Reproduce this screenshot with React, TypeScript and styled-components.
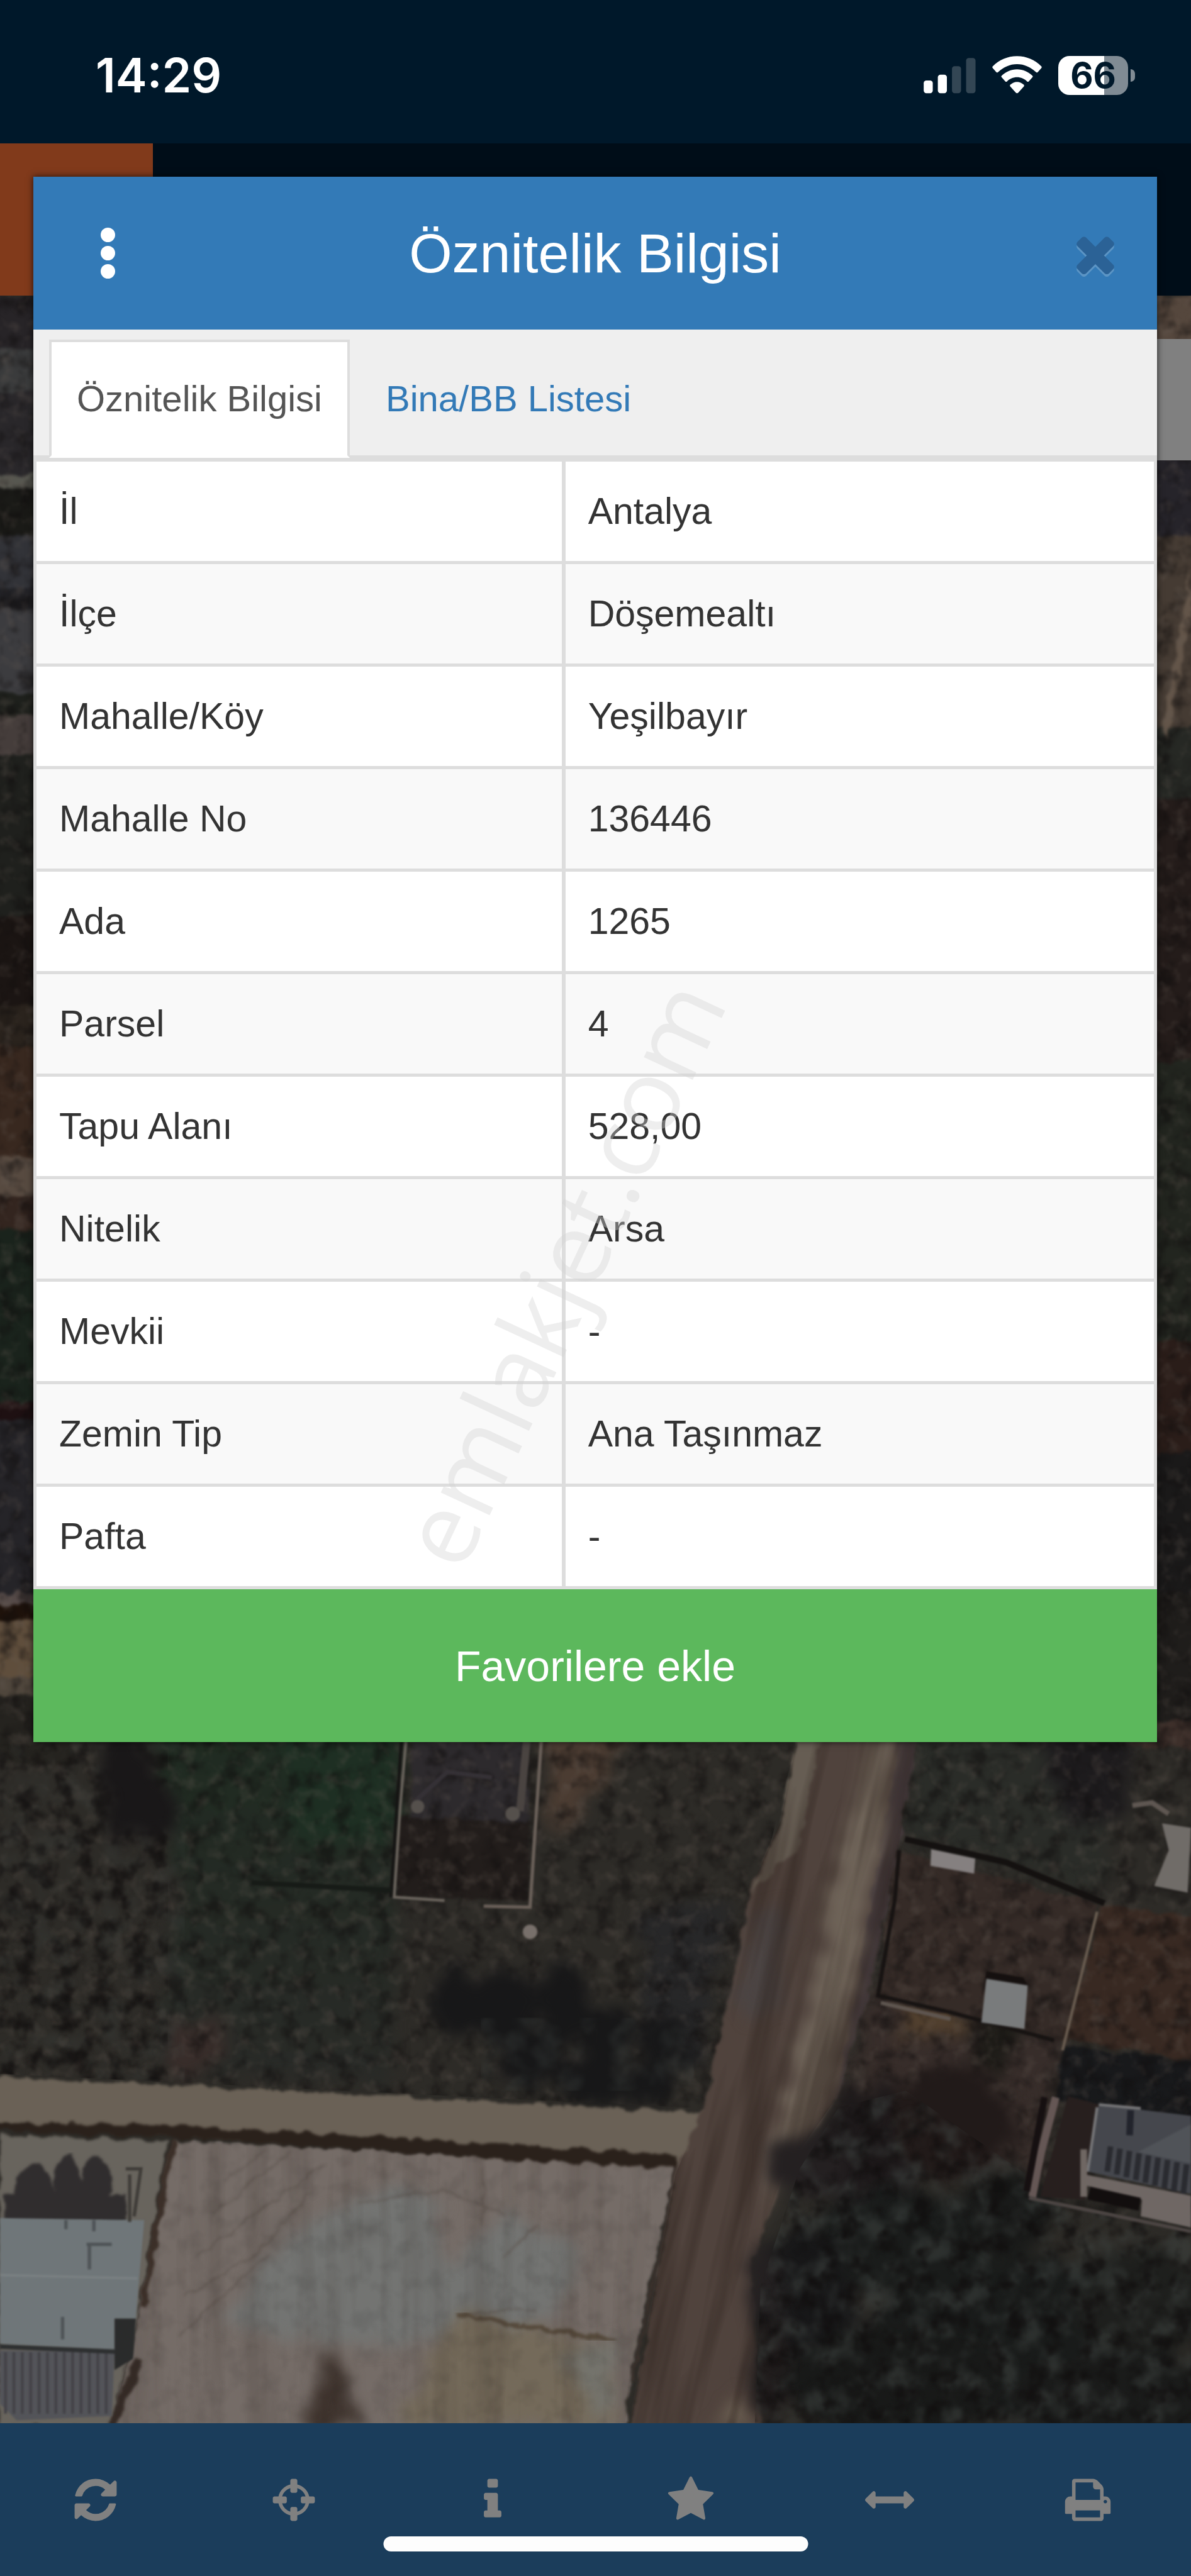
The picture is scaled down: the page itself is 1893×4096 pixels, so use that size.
import React, { useState } from "react";
import styled, { createGlobalStyle } from "styled-components";

const GlobalStyle = createGlobalStyle`
  *, *::before, *::after { box-sizing: border-box; }
  body {
    margin: 0;
    background: #00182a;
    font-family: "Liberation Sans", Arial, sans-serif;
  }
  button { font-family: inherit; cursor: pointer; }
`;

const Screen = styled.div`
  position: relative;
  display: flex;
  flex-direction: column;
  min-height: 100vh;
  overflow: hidden;
`;

const StatusBar = styled.header`
  display: flex;
  align-items: center;
  justify-content: space-between;
  height: 228px;
  padding: 12px 89px 0 152px;
  background: #00182a;
  color: #ffffff;
`;

const Clock = styled.time`
  font-family: Inter, sans-serif;
  font-size: 75px;
  line-height: 80px;
  font-weight: 600;
`;

const StatusIcons = styled.div`
  display: flex;
  align-items: center;
  gap: 26px;
`;

const Battery = styled.div`
  display: flex;
  align-items: center;
  gap: 4px;
`;

const BatteryLevel = styled.div`
  width: 111px;
  height: 62px;
  border-radius: 18px;
  background: linear-gradient(to right, #ffffff 66%, #808b94 66%);
  color: #00182a;
  font-family: Inter, sans-serif;
  font-size: 56px;
  line-height: 62px;
  font-weight: 700;
  text-align: center;
`;

const BatteryNub = styled.div`
  width: 7px;
  height: 20px;
  border-radius: 0 10px 10px 0;
  background: #808b94;
`;

const TopBar = styled.div`
  height: 242px;
  background: #000d18;
`;

const LogoTile = styled.div`
  width: 243px;
  height: 242px;
  background: #813a1b;
`;

const MapArea = styled.main`
  position: relative;
  flex: 1;
  min-height: 0;
  background: #272522;
`;

const MapDrawing = styled.svg`
  position: absolute;
  inset: 0;
  display: block;
  width: 100%;
  height: 100%;
`;

const MapControl = styled.div`
  position: absolute;
  top: 69px;
  right: 0;
  width: 243px;
  height: 193px;
  background: #808080;
`;

const Toolbar = styled.nav`
  display: grid;
  grid-template-columns: repeat(6, 1fr);
  height: 243px;
  background: #1b3d5b;
`;

const ToolButton = styled.button`
  display: flex;
  align-items: center;
  justify-content: center;
  padding: 0 12px 0 0;
  border: 0;
  background: transparent;
  color: #808080;
`;

const HomeIndicator = styled.div`
  position: absolute;
  left: 50%;
  bottom: 39px;
  width: 675px;
  height: 24px;
  border-radius: 12px;
  background: #fdfdfd;
  transform: translateX(-50%);
`;

const Dialog = styled.section`
  position: absolute;
  top: 281px;
  left: 53px;
  right: 54px;
  background: #ffffff;
  box-shadow: 0 0 10px rgba(0, 0, 0, 0.7);
`;

const DialogHeader = styled.div`
  display: grid;
  grid-template-columns: 236px 1fr 236px;
  align-items: center;
  height: 243px;
  background: #337ab7;
  color: #ffffff;
`;

const DialogTitle = styled.h1`
  margin: 0;
  font-size: 88px;
  line-height: 96px;
  font-weight: 400;
  text-align: center;
`;

const HeaderButton = styled.button<{ $side: "left" | "right" }>`
  display: flex;
  align-items: center;
  justify-content: center;
  justify-self: ${(p) => (p.$side === "left" ? "start" : "end")};
  width: ${(p) => (p.$side === "left" ? "236px" : "196px")};
  height: 200px;
  padding: 0;
  border: 0;
  background: transparent;
  color: #2b6296;
`;

const Dots = styled.span`
  display: flex;
  flex-direction: column;
  gap: 6px;
`;

const Dot = styled.span`
  width: 23px;
  height: 23px;
  border-radius: 50%;
  background: #ffffff;
`;

const Tabs = styled.div`
  display: flex;
  gap: 13px;
  height: 205px;
  padding: 16px 25px 0;
  border-bottom: 5px solid #dddddd;
  background: #efefef;
`;

const Tab = styled.button<{ $active: boolean }>`
  height: 188px;
  padding: 0 40px;
  border: 4px solid ${(p) => (p.$active ? "#dddddd" : "transparent")};
  border-bottom-color: ${(p) => (p.$active ? "#ffffff" : "transparent")};
  background: ${(p) => (p.$active ? "#ffffff" : "transparent")};
  color: ${(p) => (p.$active ? "#555555" : "#337ab7")};
  font-size: 58px;
  line-height: 84px;
`;

const Table = styled.table`
  width: 100%;
  border-collapse: separate;
  border-spacing: 0;
  border-top: 5px solid #dddddd;
  border-left: 5px solid #dddddd;
  color: #333333;
  font-size: 59px;
  line-height: 84px;
`;

const Row = styled.tr`
  background: #ffffff;
  &:nth-child(even) { background: #f9f9f9; }
`;

const NameCell = styled.th`
  width: 47.2%;
  padding: 37px 36px;
  border-right: 6px solid #dddddd;
  border-bottom: 5px solid #dddddd;
  font-weight: 400;
  text-align: left;
`;

const ValueCell = styled.td`
  padding: 37px 36px;
  border-right: 5px solid #dddddd;
  border-bottom: 5px solid #dddddd;
`;

const FavoriteButton = styled.button`
  display: block;
  width: 100%;
  height: 243px;
  border: 0;
  background: #5cb85c;
  color: #ffffff;
  font-size: 68px;
  line-height: 88px;
`;

const Watermark = styled.div`
  position: absolute;
  left: 47%;
  top: 49.4%;
  color: rgba(209, 209, 209, 0.38);
  font-family: "Open Sans", "Noto Sans", sans-serif;
  font-size: 160px;
  line-height: 218px;
  white-space: nowrap;
  pointer-events: none;
  transform: translate(-50%, -50%) rotate(-65deg);
`;

const rows: [string, string][] = [
  ["İl", "Antalya"],
  ["İlçe", "Döşemealtı"],
  ["Mahalle/Köy", "Yeşilbayır"],
  ["Mahalle No", "136446"],
  ["Ada", "1265"],
  ["Parsel", "4"],
  ["Tapu Alanı", "528,00"],
  ["Nitelik", "Arsa"],
  ["Mevkii", "-"],
  ["Zemin Tip", "Ana Taşınmaz"],
  ["Pafta", "-"],
];

const icons = {
  times:
    "M1490 1322q0 40-28 68l-136 136q-28 28-68 28t-68-28l-294-294-294 294q-28 28-68 28t-68-28l-136-136q-28-28-28-68t28-68l294-294-294-294q-28-28-28-68t28-68l136-136q28-28 68-28t68 28l294 294 294-294q28-28 68-28t68 28l136 136q28 28 28 68t-28 68l-294 294 294 294q28 28 28 68z",
  refresh:
    "M1639 1056q0 5-1 7-64 268-268 434.5t-478 166.5q-146 0-282.5-55t-243.5-157l-129 129q-19 19-45 19t-45-19-19-45v-448q0-26 19-45t45-19h448q26 0 45 19t19 45-19 45l-137 137q71 66 161 102t187 36q134 0 250-65t186-179q11-17 53-117 8-23 30-23h192q13 0 22.5 9.5t9.5 22.5zm25-800v448q0 26-19 45t-45 19h-448q-26 0-45-19t-19-45 19-45l138-138q-148-137-349-137-134 0-250 65t-186 179q-11 17-53 117-8 23-30 23h-199q-13 0-22.5-9.5t-9.5-22.5v-7q65-268 270-434.5t480-166.5q146 0 284 55.5t245 156.5l130-129q19-19 45-19t45 19 19 45z",
  crosshairs:
    "M1325 1024h-109q-26 0-45-19t-19-45v-128q0-26 19-45t45-19h109q-32-108-112.5-188.5t-188.5-112.5v109q0 26-19 45t-45 19h-128q-26 0-45-19t-19-45v-109q-108 32-188.5 112.5t-112.5 188.5h109q26 0 45 19t19 45v128q0 26-19 45t-45 19h-109q32 108 112.5 188.5t188.5 112.5v-109q0-26 19-45t45-19h128q26 0 45 19t19 45v109q108-32 188.5-112.5t112.5-188.5zm339-192v128q0 26-19 45t-45 19h-143q-37 161-154.5 278.5t-278.5 154.5v143q0 26-19 45t-45 19h-128q-26 0-45-19t-19-45v-143q-161-37-278.5-154.5t-154.5-278.5h-143q-26 0-45-19t-19-45v-128q0-26 19-45t45-19h143q37-161 154.5-278.5t278.5-154.5v-143q0-26 19-45t45-19h128q26 0 45 19t19 45v143q161 37 278.5 154.5t154.5 278.5h143q26 0 45 19t19 45z",
  info:
    "M1216 1344v128q0 26-19 45t-45 19h-512q-26 0-45-19t-19-45v-128q0-26 19-45t45-19h64v-384h-64q-26 0-45-19t-19-45v-128q0-26 19-45t45-19h384q26 0 45 19t19 45v576h64q26 0 45 19t19 45zm-128-1152v192q0 26-19 45t-45 19h-256q-26 0-45-19t-19-45v-192q0-26 19-45t45-19h256q26 0 45 19t19 45z",
  star:
    "M1728 647q0 22-26 48l-363 354 86 500q1 7 1 20 0 21-10.5 35.5t-30.5 14.5q-19 0-40-12l-449-236-449 236q-22 12-40 12-21 0-31.5-14.5t-10.5-35.5q0-6 2-20l86-500-364-354q-25-27-25-48 0-37 56-46l502-73 225-455q19-41 49-41t49 41l225 455 502 73q56 9 56 46z",
  arrows:
    "M1792 896q0 26-19 45l-256 256q-19 19-45 19t-45-19-19-45v-128h-1024v128q0 26-19 45t-45 19-45-19l-256-256q-19-19-19-45t19-45l256-256q19-19 45-19t45 19 19 45v128h1024v-128q0-26 19-45t45-19 45 19l256 256q19 19 19 45z",
  print:
    "M448 1536h896v-256h-896v256zm0-640h896v-384h-160q-40 0-68-28t-28-68v-160h-640v640zm1152 64q0-26-19-45t-45-19-45 19-19 45 19 45 45 19 45-19 19-45zm128 0v416q0 13-9.5 22.5t-22.5 9.5h-224v160q0 40-28 68t-68 28h-960q-40 0-68-28t-28-68v-160h-224q-13 0-22.5-9.5t-9.5-22.5v-416q0-79 56.5-135.5t135.5-56.5h64v-544q0-40 28-68t68-28h672q40 0 88 20t76 48l152 152q28 28 48 76t20 88v256h64q79 0 135.5 56.5t56.5 135.5z",
};

type IconName = keyof typeof icons;

function Icon({ name, size = 78 }: { name: IconName; size?: number }) {
  return (
    <svg width={size} height={size} viewBox="0 0 1792 1792" fill="currentColor" aria-hidden="true">
      <path d={icons[name]} />
    </svg>
  );
}

const tools: { icon: IconName; label: string }[] = [
  { icon: "refresh", label: "Yenile" },
  { icon: "crosshairs", label: "Konum" },
  { icon: "info", label: "Bilgi" },
  { icon: "star", label: "Favoriler" },
  { icon: "arrows", label: "Ölçüm" },
  { icon: "print", label: "Yazdır" },
];

function SignalIcon() {
  return (
    <svg width="83" height="62" viewBox="0 0 276 207" aria-hidden="true">
      <rect x="0" y="130" width="48" height="68" rx="14" fill="#fff" />
      <rect x="75" y="99" width="48" height="99" rx="14" fill="#fff" />
      <rect x="150" y="54" width="48" height="144" rx="14" fill="#334654" />
      <rect x="225" y="11" width="50" height="187" rx="14" fill="#334654" />
    </svg>
  );
}

function WifiIcon() {
  return (
    <svg width="79" height="62" viewBox="0 0 262 207" fill="#fff" aria-hidden="true">
      <path d="M131 1C81 1 36 21 2 55q-4 4 0 9l19 22q4 4 9 0C58 59 93 43 131 43s73 16 101 43q5 4 9 0l19-22q4-5 0-9C226 21 181 1 131 1z" />
      <path d="M131 71c-31 0-60 13-82 34q-4 4 0 8l20 22q4 4 9 0c14-14 33-22 53-22s39 8 53 22q5 4 9 0l20-22q4-4 0-8c-22-21-51-34-82-34z" />
      <path d="M131 138c-13 0-26 6-36 15q-4 4 0 9l30 33q6 5 12 0l30-33q4-5 0-9c-10-9-23-15-36-15z" />
    </svg>
  );
}

type Band = [number, number, string];

const leftBands: Band[] = [
  [529, 96, "#272427"], [625, 75, "#3a3b3c"], [700, 150, "#29272a"], [850, 24, "#575750"],
  [874, 86, "#1a1a17"], [960, 90, "#323338"], [1050, 40, "#222226"], [1090, 150, "#3c3c3f"],
  [1240, 40, "#1e201c"], [1280, 70, "#453d3b"], [1350, 290, "#1f201d"], [1640, 160, "#1b1513"],
  [1800, 70, "#2a231d"], [1870, 200, "#38281f"], [2070, 70, "#574a40"], [2140, 60, "#33251f"],
  [2200, 310, "#1a231c"], [2510, 30, "#1e1012"], [2540, 310, "#252428"], [2850, 20, "#554a48"],
  [2870, 30, "#1e120b"], [2900, 100, "#5f4e3c"], [3000, 34, "#4f463c"], [3034, 120, "#25231f"],
];

const rightBands: Band[] = [
  [529, 290, "#55473d"], [819, 140, "#26242a"], [959, 340, "#453b33"], [1299, 130, "#262824"],
  [1429, 470, "#241c1a"], [1899, 500, "#22251f"], [2399, 200, "#2a1d19"], [2599, 250, "#1a1919"],
  [2849, 230, "#1f1d1b"], [3079, 46, "#3e302b"],
];

const bushes: [number, number, number, number][] = [
  [815, 3590, 42, 66], [905, 3590, 52, 72], [1005, 3580, 46, 70], [1085, 3640, 50, 56],
  [1190, 3660, 44, 44], [950, 3680, 60, 50], [1060, 3720, 60, 40], [1160, 3730, 60, 36],
];

const canopy: [number, number, number, number, string][] = [
  [1560, 3850, 90, 120, "#1d191a"], [1700, 3800, 110, 100, "#211a19"], [1450, 3870, 70, 60, "#242021"],
  [1800, 3960, 90, 70, "#191a19"], [1600, 4010, 150, 90, "#1a1c1b"], [1440, 4130, 90, 140, "#171718"],
  [1800, 4180, 240, 150, "#191b1a"], [2040, 4120, 120, 100, "#1e1f1d"], [1370, 4080, 34, 60, "#242021"],
  [1380, 4240, 40, 100, "#201c1c"], [1600, 4260, 200, 100, "#181918"], [2000, 4290, 200, 80, "#1a1b1a"],
];

function SatelliteMap() {
  return (
    <MapDrawing
      viewBox="0 529 2130 3806"
      preserveAspectRatio="xMidYMax slice"
      colorInterpolationFilters="sRGB"
      aria-hidden="true"
    >
      <defs>
        <filter id="rough" x="-5%" y="-5%" width="110%" height="110%">
          <feTurbulence type="fractalNoise" baseFrequency="0.035" numOctaves="3" seed="4" result="n" />
          <feDisplacementMap in="SourceGraphic" in2="n" scale="18" xChannelSelector="R" yChannelSelector="G" />
          <feGaussianBlur stdDeviation="2.5" />
        </filter>
        <filter id="soft" x="-30%" y="-30%" width="160%" height="160%">
          <feTurbulence type="fractalNoise" baseFrequency="0.03" numOctaves="3" seed="9" result="n" />
          <feDisplacementMap in="SourceGraphic" in2="n" scale="70" xChannelSelector="R" yChannelSelector="G" />
          <feGaussianBlur stdDeviation="12" />
        </filter>
        <filter id="crisp" x="-5%" y="-5%" width="110%" height="110%">
          <feGaussianBlur stdDeviation="2" />
        </filter>
        <filter id="grainDark" x="0" y="0" width="100%" height="100%">
          <feTurbulence type="fractalNoise" baseFrequency="0.03" numOctaves="3" seed="12" />
          <feColorMatrix values="0 0 0 0 0.06  0 0 0 0 0.05  0 0 0 0 0.05  3.2 0 0 0 -1.5" />
          <feGaussianBlur stdDeviation="2" />
        </filter>
        <filter id="grainLight" x="0" y="0" width="100%" height="100%">
          <feTurbulence type="fractalNoise" baseFrequency="0.04" numOctaves="3" seed="31" />
          <feColorMatrix values="0 0 0 0 0.4  0 0 0 0 0.36  0 0 0 0 0.33  0 2.4 0 0 -1.2" />
          <feGaussianBlur stdDeviation="2" />
        </filter>
        <filter id="leaves" x="0" y="0" width="100%" height="100%">
          <feTurbulence type="fractalNoise" baseFrequency="0.022" numOctaves="4" seed="18" />
          <feColorMatrix values="0 0 0 0 0.25  0 0 0 0 0.27  0 0 0 0 0.26  0 3.4 0 0 -1.5" />
          <feGaussianBlur stdDeviation="3" />
        </filter>
        <filter id="streaks" x="0" y="0" width="100%" height="100%">
          <feTurbulence type="fractalNoise" baseFrequency="0.025 0.002" numOctaves="3" seed="7" />
          <feColorMatrix values="0 0 0 0 0.15  0 0 0 0 0.11  0 0 0 0 0.09  3 0 0 0 -1.3" />
        </filter>
        <linearGradient id="grass" x1="0" y1="0" x2="0" y2="1">
          <stop offset="0" stopColor="#1f2b21" />
          <stop offset="0.45" stopColor="#242a24" />
          <stop offset="1" stopColor="#292a27" />
        </linearGradient>
        <clipPath id="road">
          <path d="M1428 3100 1396 3258 1343 3377 1320 3495 1258 3772 1208 3890 1126 4340H1360L1343 4049 1400 3890 1494 3756 1560 3543 1606 3305 1645 3100z" />
        </clipPath>
        <clipPath id="woods">
          <path d="M1500 3770 1620 3740 1850 3900 1850 3935 2130 3990V4335H1350L1360 4090 1430 3880z" />
        </clipPath>
        <clipPath id="lot">
          <path d="M310 3830 1210 3872 1180 4000 1128 4250 1118 4335H200L250 4130z" />
        </clipPath>
        <clipPath id="ground">
          <path d="M0 529H2130V3990L1850 3930 1480 3770 1640 3100H1428L1258 3772 0 3710z" />
        </clipPath>
      </defs>

      <rect y="529" width="2130" height="3806" fill="#2d2b27" />
      <g filter="url(#rough)">
        {leftBands.map(([y, h, fill]) => (
          <rect key={y} x="-30" y={y} width="160" height={h + 2} fill={fill} />
        ))}
        {rightBands.map(([y, h, fill]) => (
          <rect key={y} x="2000" y={y} width="160" height={h + 2} fill={fill} />
        ))}
        <path d="M2080 1290 2130 1020V1110L2085 1330z" fill="#635549" />
      </g>

      <g filter="url(#soft)">
        <path d="M260 3090H720L700 3730 270 3700 330 3400z" fill="url(#grass)" />
        <path d="M510 3090H710L700 3300H520z" fill="#1e2f23" />
        <path d="M980 3090H1120L1090 3180 990 3290z" fill="#4b3c32" />
        <path d="M290 3640 400 3610 410 3690 310 3710z" fill="#382d2a" />
        <path d="M1150 3420 1310 3400 1240 3700 1150 3640z" fill="#272728" />
        <path d="M1640 3100H2000L1980 3390 1620 3280z" fill="#2a2c28" />
        <path d="M1860 3100H2020V3250L1910 3270z" fill="#1d1b1d" />
        <path d="M1560 3560 1900 3650 1850 3900 1520 3760z" fill="#372d2a" />
        <path d="M1600 3590 1730 3570 1720 3640 1610 3640z" fill="#52402e" />
        <path d="M1740 3600 1830 3620 1790 3720 1740 3680z" fill="#1e1c18" />
      </g>
      <g filter="url(#rough)">
        <path d="M1600 3310 1965 3405 1905 3650 1570 3575z" fill="#352b27" />
        <path d="M1970 3410 2140 3430V3690L1905 3645z" fill="#382922" />
        <path d="M735 3090H940L948 3270 735 3260z" fill="#2d2a2d" />
        <path d="M712 3250 948 3260 945 3400 708 3392z" fill="#221d1b" />
        <path d="M1900 3660 2140 3690V3800L1890 3760z" fill="#18191b" />
        <path d="M0 3820 300 3830 245 4150 200 4340H0z" fill="#68645d" />
      </g>
      <g clipPath="url(#ground)">
        <rect y="529" width="2130" height="3461" filter="url(#grainDark)" opacity="0.5" />
        <rect y="529" width="2130" height="3461" filter="url(#grainLight)" opacity="0.35" />
        <rect y="3120" width="330" height="600" filter="url(#leaves)" opacity="0.25" />
        <rect y="3120" width="300" height="600" filter="url(#grainDark)" opacity="0.5" />
      </g>
      <g filter="url(#soft)">
        <path d="M170 3100H250L330 3270 200 3290z" fill="#191718" />
        {bushes.map(([cx, cy, rx, ry]) => (
          <ellipse key={`${cx}-${cy}`} cx={cx} cy={cy} rx={rx} ry={ry} fill="#171718" />
        ))}
      </g>
      <rect x="860" y="3610" width="380" height="130" filter="url(#leaves)" opacity="0.3" />

      <g filter="url(#rough)">
        <path d="M-20 3715 340 3732 700 3750 1000 3768 1300 3778 1240 3880 1100 3865 -20 3800z" fill="#6a6156" />
        <path d="M310 3830 1210 3872 1180 4000 1128 4250 1118 4350H200L250 4130z" fill="#756c67" />
      </g>
      <g clipPath="url(#lot)">
        <g filter="url(#soft)">
          <path d="M450 4080Q600 3890 780 3930L790 4060 900 3960 1040 4020 1000 4140 700 4200 400 4160z" fill="#737472" />
          <path d="M820 4130 1100 4200V4340H700z" fill="#746a5a" />
          <path d="M990 4210 1110 4190 1080 4340z" fill="#74736c" />
          <path d="M585 4205 605 4210 650 4340H550z" fill="#40352f" />
          <path d="M600 4000 680 3990M480 4010 500 3980" stroke="#55524f" strokeWidth="14" />
        </g>
        <g fill="none" stroke="#5d544e" strokeWidth="4" opacity="0.55" filter="url(#rough)">
          <path d="M380 3960 520 3850M350 4040 580 3870M330 4110 460 4030 560 3920M320 4180 480 4030M400 3900 470 3850M640 3940 800 3920 900 3960" />
          <path d="M866 3880 862 3980M900 4040 960 3980M840 4140 960 4130" />
        </g>
        <path d="M815 4140 960 4165 1100 4185" fill="none" stroke="#55493b" strokeWidth="8" filter="url(#rough)" />
        <rect x="200" y="3820" width="1020" height="515" filter="url(#streaks)" opacity="0.12" />
        <rect x="200" y="3820" width="1020" height="515" filter="url(#grainDark)" opacity="0.08" />
      </g>
      <g filter="url(#rough)">
        <path d="M-10 3798 320 3802 1215 3855V3880L900 3862 310 3824 -10 3812z" fill="#2a211b" />
        <path d="M312 3828 280 3980 256 4130" fill="none" stroke="#3b2f28" strokeWidth="11" />
        <path d="M250 4220 200 4340" fill="none" stroke="#342a25" strokeWidth="14" />
        <path d="M1210 3880 1180 4030 1130 4260" fill="none" stroke="#3b312c" strokeWidth="5" />
      </g>
      <g filter="url(#rough)" fill="#302d2e">
        <ellipse cx="60" cy="3925" rx="34" ry="55" />
        <ellipse cx="120" cy="3915" rx="26" ry="58" />
        <ellipse cx="172" cy="3915" rx="28" ry="58" />
        <rect x="10" y="3925" width="215" height="50" />
      </g>
      <g filter="url(#crisp)">
        <path d="M0 3968 258 3972 243 4148 205 4148V4203L0 4193z" fill="#6f7679" />
        <path d="M0 4070 246 4076" stroke="#7b8183" strokeWidth="4" />
        <path d="M155 4015H200M160 4015V4060M118 3972V3988M168 3972V3992M112 4145V4185" stroke="#4e5356" strokeWidth="6" />
        <path d="M205 4148H243L238 4220 205 4240z" fill="#2a2b2b" />
        <path d="M0 4205 205 4208 200 4322 30 4330 0 4300z" fill="#535459" />
        {Array.from({ length: 13 }, (_, i) => (
          <path key={i} d={`M${10 + i * 15} 4208V4318`} stroke="#434247" strokeWidth="5" />
        ))}
        <path d="M0 4198 205 4207" stroke="#2d2f30" strokeWidth="8" />
        <path d="M225 3880H252L240 3965M232 3890V3975" fill="none" stroke="#3f3c38" strokeWidth="6" />
      </g>

      <g filter="url(#rough)">
        <path d="M1428 3090 1396 3258 1343 3377 1320 3495 1258 3772 1208 3890 1126 4350H1360L1343 4049 1400 3890 1494 3756 1560 3543 1606 3305 1645 3090z" fill="#50433d" />
        <path d="M1645 3090 1606 3305 1560 3543 1494 3756 1530 3560 1575 3300 1610 3090z" fill="#42383a" />
        <path d="M1428 3090H1470L1440 3250 1425 3310 1345 3385 1396 3258z" fill="#665d53" />
      </g>
      <g filter="url(#soft)">
        <path d="M1345 3430 1410 3400 1390 3600 1320 3600z" fill="#4b4443" />
        <path d="M1560 3090H1605L1570 3300 1525 3560 1475 3770 1400 3890 1360 4000 1395 3800 1465 3500 1500 3320z" fill="#6e6358" />
        <path d="M1290 4300 1330 4290 1350 4340H1270z" fill="#685c50" />
      </g>
      <g clipPath="url(#road)">
        <g transform="rotate(13 1385 3720)">
          <rect x="1000" y="2900" width="800" height="1700" filter="url(#streaks)" opacity="0.4" />
        </g>
      </g>

      <g filter="url(#soft)">
        {canopy.map(([cx, cy, rx, ry, fill]) => (
          <ellipse key={`${cx}-${cy}`} cx={cx} cy={cy} rx={rx} ry={ry} fill={fill} />
        ))}
      </g>
      <g clipPath="url(#woods)">
        <rect x="1330" y="3730" width="800" height="605" filter="url(#leaves)" opacity="0.5" />
        <rect x="1330" y="3730" width="800" height="605" filter="url(#grainDark)" opacity="0.7" />
      </g>

      <g filter="url(#crisp)" fill="none">
        <path d="M726 3115 716 3230 705 3394 795 3400" stroke="#6a645d" strokeWidth="5" />
        <path d="M718 3115 710 3230 699 3394" stroke="#151413" strokeWidth="5" />
        <path d="M968 3115 956 3290 948 3412 865 3410" stroke="#6b615a" strokeWidth="6" />
        <path d="M942 3115 930 3240" stroke="#4a4441" strokeWidth="14" />
        <path d="M745 3220 800 3170 880 3180" stroke="#353136" strokeWidth="8" />
        <circle cx="747" cy="3232" r="12" fill="#55504c" />
        <circle cx="917" cy="3245" r="13" fill="#55504c" />
        <circle cx="948" cy="3456" r="13" fill="#78706b" />
        <path d="M450 3368 560 3374 700 3382" stroke="#171b17" strokeWidth="9" />
        <path d="M1618 3290 1800 3332 1975 3405" stroke="#141110" strokeWidth="11" />
        <path d="M1608 3310 1600 3400 1570 3570 1700 3600 1885 3650" stroke="#171312" strokeWidth="7" />
        <path d="M1575 3583 1700 3612" stroke="#5f5650" strokeWidth="7" />
        <path d="M1962 3420 1900 3668" stroke="#6a5d51" strokeWidth="5" />
        <path d="M1665 3308 1744 3325 1742 3352 1664 3338z" fill="#858080" />
        <path d="M1764 3526 1830 3538 1840 3556 1762 3545 1752 3590z" fill="#15100f" />
        <path d="M1764 3540 1838 3552 1832 3630 1755 3618z" fill="#797b7c" />
        <path d="M2078 3262 2130 3270 2124 3386 2064 3374 2090 3310z" fill="#706c68" />
        <path d="M2025 3230 2060 3225 2090 3245" stroke="#5f5752" strokeWidth="9" />
        <path d="M1888 3752 1862 3850 1846 3930" stroke="#655755" strokeWidth="14" />
        <path d="M1868 3752 1836 3920" stroke="#161011" strokeWidth="12" />
        <path d="M1910 3750 1965 3765 1940 3935 1860 3930z" fill="#271f1e" />
        <path d="M1965 3765 2130 3785V3925L1945 3885z" fill="#45474d" />
        <path d="M2035 3850 2130 3800V3870z" fill="#505358" />
        <path d="M1965 3765 2040 3772M1962 3770 1945 3885" stroke="#777779" strokeWidth="5" />
        {Array.from({ length: 9 }, (_, i) => (
          <path key={i} d={`M${1986 + i * 17} ${3840 + i * 4}L${1980 + i * 17} ${3885 + i * 5}`} stroke="#2a2b30" strokeWidth="10" />
        ))}
        <path d="M2022 3775 2020 3820" stroke="#22242c" strokeWidth="12" />
        <path d="M1940 3890 2130 3928V3985L2040 3965 2042 3935 1942 3910z" fill="#6f6764" />
        <path d="M1950 3912 2040 3932 2036 3955 1945 3935z" fill="#120e0e" />
        <path d="M1840 3932 2130 3992" stroke="#4d4644" strokeWidth="6" />
        <path d="M1938 3845V3930" stroke="#6f6763" strokeWidth="12" />
      </g>
    </MapDrawing>
  );
}

export default function App() {
  const [tab, setTab] = useState(0);
  return (
    <>
      <GlobalStyle />
      <Screen>
        <StatusBar>
          <Clock>14:29</Clock>
          <StatusIcons>
            <SignalIcon />
            <WifiIcon />
            <Battery>
              <BatteryLevel>66</BatteryLevel>
              <BatteryNub />
            </Battery>
          </StatusIcons>
        </StatusBar>
        <TopBar>
          <LogoTile />
        </TopBar>
        <MapArea>
          <SatelliteMap />
          <MapControl />
        </MapArea>
        <Toolbar>
          {tools.map((tool) => (
            <ToolButton key={tool.icon} type="button" aria-label={tool.label}>
              <Icon name={tool.icon} />
            </ToolButton>
          ))}
        </Toolbar>
        <HomeIndicator />
        <Dialog role="dialog" aria-labelledby="dialog-title">
          <DialogHeader>
            <HeaderButton $side="left" type="button" aria-label="Menü">
              <Dots>
                <Dot />
                <Dot />
                <Dot />
              </Dots>
            </HeaderButton>
            <DialogTitle id="dialog-title">Öznitelik Bilgisi</DialogTitle>
            <HeaderButton $side="right" type="button" aria-label="Kapat">
              <svg width="90" height="90" viewBox="0 0 1792 1792" aria-hidden="true">
                <path d={icons.times} fill="#5c95c5" transform="translate(0 80)" />
                <path d={icons.times} fill="currentColor" />
              </svg>
            </HeaderButton>
          </DialogHeader>
          <Tabs role="tablist">
            {["Öznitelik Bilgisi", "Bina/BB Listesi"].map((label, i) => (
              <Tab
                key={label}
                type="button"
                role="tab"
                aria-selected={tab === i}
                $active={tab === i}
                onClick={() => setTab(i)}
              >
                {label}
              </Tab>
            ))}
          </Tabs>
          <Table>
            <tbody>
              {rows.map(([name, value]) => (
                <Row key={name}>
                  <NameCell scope="row">{name}</NameCell>
                  <ValueCell>{value}</ValueCell>
                </Row>
              ))}
            </tbody>
          </Table>
          <FavoriteButton type="button">Favorilere ekle</FavoriteButton>
        </Dialog>
        <Watermark>emlakjet.com</Watermark>
      </Screen>
    </>
  );
}
